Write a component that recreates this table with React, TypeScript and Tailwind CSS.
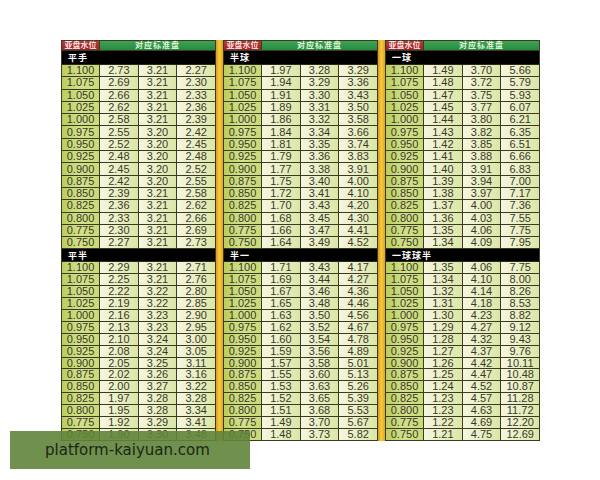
import React from "react";

const levels = [
  "1.100", "1.075", "1.050", "1.025", "1.000", "0.975", "0.950", "0.925",
  "0.900", "0.875", "0.850", "0.825", "0.800", "0.775", "0.750",
];

interface Block {
  title: string;
  odds: string[][];
}

const tables: Block[][] = [
  [
    {
      title: "平手",
      odds: [
        ["2.73", "3.21", "2.27"], ["2.69", "3.21", "2.30"], ["2.66", "3.21", "2.33"],
        ["2.62", "3.21", "2.36"], ["2.58", "3.21", "2.39"], ["2.55", "3.20", "2.42"],
        ["2.52", "3.20", "2.45"], ["2.48", "3.20", "2.48"], ["2.45", "3.20", "2.52"],
        ["2.42", "3.20", "2.55"], ["2.39", "3.21", "2.58"], ["2.36", "3.21", "2.62"],
        ["2.33", "3.21", "2.66"], ["2.30", "3.21", "2.69"], ["2.27", "3.21", "2.73"],
      ],
    },
    {
      title: "平半",
      odds: [
        ["2.29", "3.21", "2.71"], ["2.25", "3.21", "2.76"], ["2.22", "3.22", "2.80"],
        ["2.19", "3.22", "2.85"], ["2.16", "3.23", "2.90"], ["2.13", "3.23", "2.95"],
        ["2.10", "3.24", "3.00"], ["2.08", "3.24", "3.05"], ["2.05", "3.25", "3.11"],
        ["2.02", "3.26", "3.16"], ["2.00", "3.27", "3.22"], ["1.97", "3.28", "3.28"],
        ["1.95", "3.28", "3.34"], ["1.92", "3.29", "3.41"], ["1.90", "3.30", "3.48"],
      ],
    },
  ],
  [
    {
      title: "半球",
      odds: [
        ["1.97", "3.28", "3.29"], ["1.94", "3.29", "3.36"], ["1.91", "3.30", "3.43"],
        ["1.89", "3.31", "3.50"], ["1.86", "3.32", "3.58"], ["1.84", "3.34", "3.66"],
        ["1.81", "3.35", "3.74"], ["1.79", "3.36", "3.83"], ["1.77", "3.38", "3.91"],
        ["1.75", "3.40", "4.00"], ["1.72", "3.41", "4.10"], ["1.70", "3.43", "4.20"],
        ["1.68", "3.45", "4.30"], ["1.66", "3.47", "4.41"], ["1.64", "3.49", "4.52"],
      ],
    },
    {
      title: "半一",
      odds: [
        ["1.71", "3.43", "4.17"], ["1.69", "3.44", "4.27"], ["1.67", "3.46", "4.36"],
        ["1.65", "3.48", "4.46"], ["1.63", "3.50", "4.56"], ["1.62", "3.52", "4.67"],
        ["1.60", "3.54", "4.78"], ["1.59", "3.56", "4.89"], ["1.57", "3.58", "5.01"],
        ["1.55", "3.60", "5.13"], ["1.53", "3.63", "5.26"], ["1.52", "3.65", "5.39"],
        ["1.51", "3.68", "5.53"], ["1.49", "3.70", "5.67"], ["1.48", "3.73", "5.82"],
      ],
    },
  ],
  [
    {
      title: "一球",
      odds: [
        ["1.49", "3.70", "5.66"], ["1.48", "3.72", "5.79"], ["1.47", "3.75", "5.93"],
        ["1.45", "3.77", "6.07"], ["1.44", "3.80", "6.21"], ["1.43", "3.82", "6.35"],
        ["1.42", "3.85", "6.51"], ["1.41", "3.88", "6.66"], ["1.40", "3.91", "6.83"],
        ["1.39", "3.94", "7.00"], ["1.38", "3.97", "7.17"], ["1.37", "4.00", "7.36"],
        ["1.36", "4.03", "7.55"], ["1.35", "4.06", "7.75"], ["1.34", "4.09", "7.95"],
      ],
    },
    {
      title: "一球球半",
      odds: [
        ["1.35", "4.06", "7.75"], ["1.34", "4.10", "8.00"], ["1.32", "4.14", "8.26"],
        ["1.31", "4.18", "8.53"], ["1.30", "4.23", "8.82"], ["1.29", "4.27", "9.12"],
        ["1.28", "4.32", "9.43"], ["1.27", "4.37", "9.76"], ["1.26", "4.42", "10.11"],
        ["1.25", "4.47", "10.48"], ["1.24", "4.52", "10.87"], ["1.23", "4.57", "11.28"],
        ["1.23", "4.63", "11.72"], ["1.22", "4.69", "12.20"], ["1.21", "4.75", "12.69"],
      ],
    },
  ],
];

const cjk = "font-['Noto_Sans_CJK_SC',sans-serif]";

const Section: React.FC<{ block: Block; rowClass: string; titleClass: string }> = ({
  block,
  rowClass,
  titleClass,
}) => (
  <>
    <div
      className={`${titleClass} bg-black text-white text-[9px] font-bold leading-none pl-[6px] flex items-center tracking-[1px] border-b border-[#2b2a1a] ${cjk}`}
    >
      {block.title}
    </div>
    {block.odds.map((row, i) => (
      <div key={i} className={`${rowClass} flex border-b border-[#3d3a22]`}>
        <div className="w-[38px] shrink-0 border-r border-[#3d3a22] bg-linear-to-r from-[#b9cd5c] via-[#d3e08a] to-[#c9da74] flex items-center justify-center">
          {levels[i]}
        </div>
        {row.map((v, j) => (
          <div
            key={j}
            className={`flex-1 flex items-center justify-center bg-linear-to-r from-[#f4f6df] to-[#dce6a6] ${
              j < 2 ? "border-r border-[#3d3a22]" : ""
            }`}
          >
            {v}
          </div>
        ))}
      </div>
    ))}
  </>
);

const Table: React.FC<{ blocks: Block[] }> = ({ blocks }) => (
  <div className="w-[155px] flex flex-col border-x border-t border-[#3d3a22] text-[11px] leading-none text-[#3a3a2c] font-['Liberation_Sans',Arial,sans-serif]">
    <div className="h-[9.5px] flex border-b border-[#3d3a22]">
      <div
        className={`w-[38px] shrink-0 bg-linear-to-b from-[#b83a3a] to-[#962424] text-[#f6dede] text-[8px] font-bold flex items-center justify-center border-r border-[#3d3a22] ${cjk}`}
      >
        亚盘水位
      </div>
      <div
        className={`flex-1 bg-linear-to-b from-[#3fa357] to-[#268a3f] text-[#dff5d6] text-[8px] font-bold flex items-center justify-center tracking-[1px] ${cjk}`}
      >
        对应标准盘
      </div>
    </div>
    <Section block={blocks[0]} titleClass="h-[14.5px]" rowClass="h-[12.3px]" />
    <Section block={blocks[1]} titleClass="h-[13px]" rowClass="h-[11.9px]" />
  </div>
);

const Divider: React.FC = () => (
  <div className="w-[7px] bg-linear-to-r from-[#d89a26] via-[#f6cc3a] to-[#dca22a]" />
);

export default function App() {
  return (
    <div className="relative w-[600px] h-[480px] bg-white overflow-hidden">
      <div className="pt-[40px] pl-[61px] flex">
        <Table blocks={tables[0]} />
        <Divider />
        <Table blocks={tables[1]} />
        <Divider />
        <Table blocks={tables[2]} />
      </div>

      {/* watermark overlay */}
      <div className="absolute left-[10px] top-[431px] w-[240px] h-[38px] bg-[#60843b]/90 flex items-center pl-[35px]">
        <span className="text-[15px] text-[#1b2616] font-['DejaVu_Sans',sans-serif]">
          platform-kaiyuan.com
        </span>
      </div>
    </div>
  );
}
